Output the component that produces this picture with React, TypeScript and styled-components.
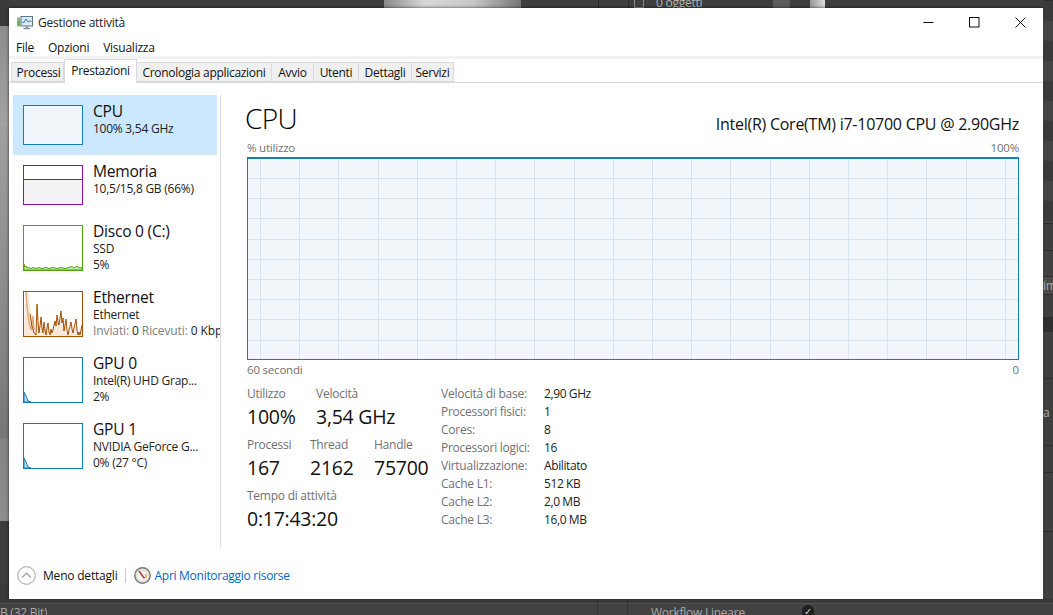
import React from "react";
import styled, { createGlobalStyle } from "styled-components";

const GlobalStyle = createGlobalStyle`
  html, body {
    margin: 0;
    padding: 0;
    height: 615px;
    overflow: hidden;
    background: #3c3c3c;
    font-family: "Open Sans", "Noto Sans", "Liberation Sans", sans-serif;
    font-size: 12px;
    letter-spacing: -0.25px;
  }
`;

const Desktop = styled.div`
  width: 1053px;
  height: 615px;
  display: grid;
  grid-template-columns: 9px 1fr 10px;
  grid-template-rows: 8px 1fr 16px;
  overflow: hidden;
`;

const LeftStrip = styled.div`
  grid-row: 1 / 3;
  display: flex;
  flex-direction: column;
  background: #3a3a3a;
`;

const LeftBand = styled.div<{ $h: number; $bg: string }>`
  height: ${(p) => p.$h}px;
  background: ${(p) => p.$bg};
  flex-shrink: 0;
`;

const TopStrip = styled.div`
  display: flex;
  background: #3e3e3e;
  overflow: hidden;
  color: #b5b5b5;
`;

const TopChunk = styled.div<{ $w: number; $bg?: string; $line?: boolean }>`
  width: ${(p) => p.$w}px;
  height: 8px;
  flex-shrink: 0;
  background: ${(p) => p.$bg || "transparent"};
  border-right: ${(p) => (p.$line ? "1px solid #2b2b2b" : "none")};
  box-sizing: border-box;
`;

const PlusBox = styled.div`
  width: 10px;
  height: 8px;
  margin: 0 12px 0 5px;
  flex-shrink: 0;
  box-sizing: border-box;
  border: 1px solid #8a8a8a;
  border-top: none;
`;

const TopText = styled.div`
  font-size: 12px;
  line-height: 6px;
  height: 8px;
  width: 117px;
  flex-shrink: 0;
  overflow: hidden;
`;

const RightStrip = styled.div`
  grid-row: 1 / 3;
  grid-column: 3;
  display: flex;
  flex-direction: column;
  overflow: hidden;
  color: #a9a9a9;
`;

const RightBand = styled.div<{ $h: number; $bg: string }>`
  height: ${(p) => p.$h}px;
  flex-shrink: 0;
  background: ${(p) => p.$bg};
  border-top: 1px solid #2e2e2e;
  box-sizing: border-box;
  font-size: 12px;
  line-height: ${(p) => p.$h}px;
  white-space: nowrap;
  overflow: hidden;
`;

const BottomStrip = styled.div`
  grid-column: 1 / 4;
  display: flex;
  background: linear-gradient(#3a3a3a 3px, #525252 3px, #525252 4px, #424242 4px);
  border-top: 1px solid #343434;
  box-sizing: border-box;
  overflow: hidden;
  color: #a8a8a8;
  font-size: 12px;
`;

const BottomCell = styled.div<{ $w: number; $line?: boolean }>`
  width: ${(p) => p.$w}px;
  flex-shrink: 0;
  box-sizing: border-box;
  display: flex;
  align-items: flex-end;
  border-right: ${(p) => (p.$line ? "1px solid #333" : "none")};
`;

const BottomText = styled.div`
  height: 9px;
  line-height: 14px;
  white-space: nowrap;
  overflow: hidden;
`;

const BottomCheck = styled.div`
  width: 12px;
  height: 10px;
  border-radius: 6px 6px 0 0;
  background: #1f1f1f;
  color: #cfcfcf;
  font-size: 10px;
  line-height: 12px;
  text-align: center;
  overflow: hidden;
  align-self: flex-end;
`;

const Window = styled.div`
  grid-column: 2;
  display: flex;
  flex-direction: column;
  background: #fff;
  box-shadow: 0 0 3px rgba(0, 0, 0, 0.7);
  color: #000;
  min-height: 0;
`;

const TitleBar = styled.div`
  height: 29px;
  display: flex;
  align-items: center;
  padding-left: 8px;
  flex-shrink: 0;
`;

const TitleText = styled.div`
  margin-left: 5px;
  color: #222;
  flex: 1;
`;

const WinButton = styled.div`
  width: 46px;
  height: 29px;
  display: flex;
  align-items: center;
  justify-content: center;
`;

const MenuBar = styled.div`
  height: 19px;
  box-sizing: border-box;
  display: flex;
  align-items: center;
  padding: 1px 0 0 7px;
  gap: 14px;
  flex-shrink: 0;
`;

const MenuItem = styled.div`
  color: #111;
`;

const TabBar = styled.div`
  height: 27px;
  display: flex;
  align-items: flex-end;
  box-sizing: border-box;
  padding-left: 2px;
  background: linear-gradient(#f2f2f2 0, #f2f2f2 3px, #fff 3px);
  border-bottom: 1px solid #d9d9d9;
  flex-shrink: 0;
`;

const Tab = styled.div<{ $w: number; $active?: boolean }>`
  width: ${(p) => p.$w}px;
  height: ${(p) => (p.$active ? 24 : 20)}px;
  margin-bottom: ${(p) => (p.$active ? -1 : 0)}px;
  box-sizing: border-box;
  display: flex;
  align-items: center;
  justify-content: center;
  background: ${(p) => (p.$active ? "#fff" : "#f0f0f0")};
  border: 1px solid #d9d9d9;
  border-left-width: ${(p) => (p.$active ? 1 : 0)}px;
  border-bottom-width: ${(p) => (p.$active ? 0 : 1)}px;
  padding-bottom: ${(p) => (p.$active ? 2 : 0)}px;
  color: #111;
  letter-spacing: -0.3px;
  &:first-child {
    border-left-width: 1px;
    padding-left: 2px;
  }
`;

const Body = styled.div`
  flex: 1;
  min-height: 0;
  display: flex;
  padding-top: 12px;
`;

const Sidebar = styled.div`
  width: 212px;
  flex-shrink: 0;
  box-sizing: border-box;
  border-right: 1px solid #dcdcdc;
  overflow: hidden;
  padding-left: 4px;
`;

const Item = styled.div<{ $selected?: boolean; $tall?: boolean }>`
  width: 204px;
  height: ${(p) => (p.$tall ? 66 : 60)}px;
  box-sizing: border-box;
  padding: 10px 0 0 10px;
  display: flex;
  gap: 10px;
  background: ${(p) => (p.$selected ? "#cce8ff" : "transparent")};
`;

const Thumb = styled.div<{ $tall?: boolean; $color: string; $bg?: string }>`
  width: 60px;
  height: ${(p) => (p.$tall ? 46 : 40)}px;
  box-sizing: border-box;
  border: 1px solid ${(p) => p.$color};
  background: ${(p) => p.$bg || "#fff"};
  flex-shrink: 0;
  display: flex;
  flex-direction: column;
`;

const MemoryTop = styled.div`
  height: 13px;
  background: #fff;
  border-bottom: 1px solid #8b12ae;
`;

const ThumbSvg = styled.svg`
  display: block;
  width: 58px;
  height: 44px;
`;

const ItemText = styled.div`
  margin-top: -4px;
  white-space: nowrap;
`;

const ItemName = styled.div`
  font-size: 15.6px;
  line-height: 20px;
  color: #111;
`;

const ItemSub = styled.div`
  line-height: 16px;
  color: #222;
`;

const TransferLine = styled(ItemSub)`
  letter-spacing: -0.1px;
`;

const Muted = styled.span`
  color: #808080;
`;

const Panel = styled.div`
  flex: 1;
  min-width: 0;
  padding: 0 24px 0 26px;
  display: flex;
  flex-direction: column;
`;

const Header = styled.div`
  display: flex;
  justify-content: space-between;
  align-items: center;
  height: 46px;
  margin-top: -8px;
  padding-top: 8px;
`;

const BigTitle = styled.div`
  font-size: 28px;
  font-weight: 300;
  letter-spacing: -0.6px;
  margin-left: -2px;
  color: #000;
`;

const CpuName = styled.div`
  font-size: 16px;
  letter-spacing: -0.25px;
  margin-top: 11px;
  color: #111;
`;

const AxisRow = styled.div`
  display: flex;
  justify-content: space-between;
  align-items: center;
  height: 16px;
  margin: -2px 0 2px;
  font-size: 11.5px;
  letter-spacing: -0.2px;
  color: #707070;
`;

const Chart = styled.div`
  height: 203px;
  box-sizing: border-box;
  border: 2px solid #117dbb;
  border-width: 2px 1.5px 1.5px 1.5px;
  background: #f1f6fa;
  flex-shrink: 0;
  overflow: hidden;
`;

const ChartSvg = styled.svg`
  display: block;
  width: 100%;
  height: 100%;
`;

const CaptionRow = styled(AxisRow)`
  margin: 1px 0 0;
`;

const Stats = styled.div`
  display: flex;
  margin-top: 9px;
`;

const StatsLeft = styled.div`
  width: 194px;
  flex-shrink: 0;
`;

const StatRow = styled.div`
  display: flex;
  height: 51px;
`;

const Stat = styled.div<{ $w: number }>`
  width: ${(p) => p.$w}px;
  flex-shrink: 0;
`;

const StatLabel = styled.div`
  line-height: 16px;
  color: #707070;
`;

const StatValue = styled.div`
  font-size: 19.5px;
  line-height: 30px;
  letter-spacing: -0.25px;
  color: #111;
  white-space: nowrap;
`;

const Details = styled.div`
  display: grid;
  grid-template-columns: 103px auto;
  grid-auto-rows: 18px;
  align-items: center;
  justify-content: start;
  margin-top: -2px;
`;

const DetailKey = styled.div`
  color: #707070;
`;

const DetailValue = styled.div`
  color: #222;
  letter-spacing: -0.4px;
`;

const Footer = styled.div`
  height: 44px;
  box-sizing: border-box;
  padding: 0 0 4px 8px;
  flex-shrink: 0;
  display: flex;
  align-items: center;
  margin-top: 8px;
`;

const FooterLabel = styled.div`
  margin-left: 7px;
  color: #111;
  letter-spacing: -0.2px;
`;

const FooterSep = styled.div`
  width: 1px;
  height: 15px;
  background: #c8c8c8;
  margin: 0 8px 0 7px;
`;

const FooterLink = styled.a`
  margin-left: 4px;
  color: #0066cc;
  letter-spacing: -0.28px;
`;

const IconSvg = styled.svg`
  display: block;
  flex-shrink: 0;
`;

const tabs = [
  { label: "Processi", w: 53 },
  { label: "Prestazioni", w: 73, active: true },
  { label: "Cronologia applicazioni", w: 135 },
  { label: "Avvio", w: 42 },
  { label: "Utenti", w: 45 },
  { label: "Dettagli", w: 53 },
  { label: "Servizi", w: 42 },
];

const verticals = Array.from({ length: 20 }, (_, i) => Math.round(12 + i * 39.2));
const horizontals = Array.from({ length: 9 }, (_, i) => Math.round(19 + i * 20.2));

const details = [
  ["Velocità di base:", "2,90 GHz"],
  ["Processori fisici:", "1"],
  ["Cores:", "8"],
  ["Processori logici:", "16"],
  ["Virtualizzazione:", "Abilitato"],
  ["Cache L1:", "512 KB"],
  ["Cache L2:", "2,0 MB"],
  ["Cache L3:", "16,0 MB"],
];

const ethernetArea =
  "1,0 5,0 7,20 10,38 12,43 13,12 15,40 17,26 19,40 20,30 22,42 24,32 26,42 27,38 29,40 31,30 33,24 35,32 37,20 38,30 40,38 42,28 44,43 46,36 48,30 50,40 52,28 54,42 56,42 58,34 58,44 0,44";

const ethernetPale = "2,0 3,14 5,30 7,38 9,24 10,38";

const ethernetLine =
  "6,22 8,34 10,41 12,43 13,12 14,30 15,41 16,34 17,25 18,36 19,41 20,30 21,38 22,43 23,36 24,31 25,40 26,43 27,37 28,41 29,38 30,33 31,29 32,34 33,23 34,30 35,33 36,26 37,19 38,31 39,26 40,39 41,33 42,27 43,38 44,43 45,38 46,34 47,30 48,37 49,41 50,36 51,32 52,27 53,38 54,43 55,40 56,43 57,38 58,33";

const diskPoints =
  "0,44 0,38 1,41 2,40 3,42 5,41.5 7,42.5 9,41.5 12,42.5 15,41.5 18,42.5 22,41.5 25,42.5 29,41.5 33,42.5 37,41.5 41,42.5 45,41.5 48,40.5 50,42 53,40 55,42 58,41.5 58,44";

const GpuSpark = () => (
  <ThumbSvg viewBox="0 0 58 44">
    <polygon points="0,44 0,34 2,38 4,43 7,44" fill="#bcdcee" stroke="#117dbb" strokeWidth="1" />
  </ThumbSvg>
);

const EthernetSpark = () => (
  <ThumbSvg viewBox="0 0 58 44">
    <polygon points={ethernetArea} fill="#f8e9dc" />
    <polyline points={ethernetPale} fill="none" stroke="#e3a877" strokeWidth="1.4" />
    <polyline points={ethernetLine} fill="none" stroke="#a74f01" strokeWidth="1" />
  </ThumbSvg>
);

const AppIcon = () => (
  <IconSvg width="16" height="16" viewBox="0 0 16 16">
    <rect x="0.5" y="3" width="2.5" height="8" fill="#9fb89a" stroke="#6f8f6a" strokeWidth="0.5" />
    <rect x="0.8" y="6" width="1.8" height="4.5" fill="#4fae58" />
    <rect x="4" y="1.5" width="11.5" height="9.5" fill="#dcecf7" stroke="#5f7484" strokeWidth="1" />
    <polyline points="5,7 7,7.5 9,4 11,7 12.5,6 14.5,6.5" fill="none" stroke="#2a7fc4" strokeWidth="1" />
    <rect x="8.5" y="11" width="2.5" height="2" fill="#8a99a5" />
    <rect x="6.5" y="13" width="6.5" height="1.2" fill="#7f8d98" />
  </IconSvg>
);

const MonitorIcon = () => (
  <IconSvg width="17" height="17" viewBox="0 0 17 17">
    <circle cx="8.5" cy="8.5" r="7.7" fill="#efeee9" stroke="#7b7872" strokeWidth="1.4" />
    <circle cx="8.5" cy="8.5" r="5.6" fill="#fbfaf6" stroke="#c8c5bd" strokeWidth="0.7" />
    <line x1="5" y1="4" x2="10.5" y2="11.5" stroke="#c9302a" strokeWidth="1.5" />
    <line x1="12" y1="7" x2="12" y2="11" stroke="#e8862a" strokeWidth="1.2" />
  </IconSvg>
);

const App = () => {
  return (
    <>
      <GlobalStyle />
      <Desktop>
        <LeftStrip>
          <LeftBand $h={26} $bg="#3a3a3a" />
          <LeftBand $h={100} $bg="linear-gradient(#8d8d8d, #a3a3a3)" />
          <LeftBand $h={180} $bg="linear-gradient(#a0a0a0, #8a8a8a)" />
          <LeftBand $h={132} $bg="linear-gradient(#8a8a8a, #777)" />
          <LeftBand $h={83} $bg="linear-gradient(#838383, #8e8e8e)" />
          <LeftBand $h={63} $bg="#3d3d3d" />
        </LeftStrip>

        <TopStrip>
          <TopChunk $w={375} />
          <TopChunk $w={137} $bg="linear-gradient(90deg, #8a8a8a, #d8d8d8 30%, #c8c8c8 65%, #777)" />
          <TopChunk $w={78} $line />
          <TopChunk $w={30} $line />
          <PlusBox />
          <TopText>0 oggetti</TopText>
          <TopChunk $w={17} $bg="#5c5c5c" />
          <TopChunk $w={20} />
          <TopChunk $w={15} $bg="linear-gradient(90deg, #999, #ddd)" />
        </TopStrip>

        <Window>
          <TitleBar>
            <AppIcon />
            <TitleText>Gestione attività</TitleText>
            <WinButton>
              <svg width="11" height="11" viewBox="0 0 11 11">
                <rect x="0.5" y="5" width="10" height="1" fill="#111" />
              </svg>
            </WinButton>
            <WinButton>
              <svg width="11" height="11" viewBox="0 0 11 11">
                <rect x="0.5" y="0.5" width="9.5" height="9.5" fill="none" stroke="#111" strokeWidth="1" />
              </svg>
            </WinButton>
            <WinButton>
              <svg width="11" height="11" viewBox="0 0 11 11">
                <path d="M0.5 0.5 L10.5 10.5 M10.5 0.5 L0.5 10.5" stroke="#111" strokeWidth="1" />
              </svg>
            </WinButton>
          </TitleBar>

          <MenuBar>
            <MenuItem>File</MenuItem>
            <MenuItem>Opzioni</MenuItem>
            <MenuItem>Visualizza</MenuItem>
          </MenuBar>

          <TabBar>
            {tabs.map((t) => (
              <Tab key={t.label} $w={t.w} $active={t.active}>
                {t.label}
              </Tab>
            ))}
          </TabBar>

          <Body>
            <Sidebar>
              <Item $selected>
                <Thumb $color="#117dbb" $bg="#f1f6fa" />
                <ItemText>
                  <ItemName>CPU</ItemName>
                  <ItemSub>100% 3,54 GHz</ItemSub>
                </ItemText>
              </Item>
              <Item>
                <Thumb $color="#8b12ae" $bg="#f4f2f4">
                  <MemoryTop />
                </Thumb>
                <ItemText>
                  <ItemName>Memoria</ItemName>
                  <ItemSub>10,5/15,8 GB (66%)</ItemSub>
                </ItemText>
              </Item>
              <Item $tall>
                <Thumb $tall $color="#4da60c">
                  <ThumbSvg viewBox="0 0 58 44">
                    <polygon points={diskPoints} fill="#cfe8bd" stroke="#4da60c" strokeWidth="1" />
                  </ThumbSvg>
                </Thumb>
                <ItemText>
                  <ItemName>Disco 0 (C:)</ItemName>
                  <ItemSub>SSD</ItemSub>
                  <ItemSub>5%</ItemSub>
                </ItemText>
              </Item>
              <Item $tall>
                <Thumb $tall $color="#a74f01">
                  <EthernetSpark />
                </Thumb>
                <ItemText>
                  <ItemName>Ethernet</ItemName>
                  <ItemSub>Ethernet</ItemSub>
                  <TransferLine>
                    <Muted>Inviati:</Muted> 0 <Muted>Ricevuti:</Muted> 0 Kbps
                  </TransferLine>
                </ItemText>
              </Item>
              <Item $tall>
                <Thumb $tall $color="#117dbb">
                  <GpuSpark />
                </Thumb>
                <ItemText>
                  <ItemName>GPU 0</ItemName>
                  <ItemSub>Intel(R) UHD Grap...</ItemSub>
                  <ItemSub>2%</ItemSub>
                </ItemText>
              </Item>
              <Item $tall>
                <Thumb $tall $color="#117dbb">
                  <GpuSpark />
                </Thumb>
                <ItemText>
                  <ItemName>GPU 1</ItemName>
                  <ItemSub>NVIDIA GeForce G...</ItemSub>
                  <ItemSub>0% (27 °C)</ItemSub>
                </ItemText>
              </Item>
            </Sidebar>

            <Panel>
              <Header>
                <BigTitle>CPU</BigTitle>
                <CpuName>Intel(R) Core(TM) i7-10700 CPU @ 2.90GHz</CpuName>
              </Header>
              <AxisRow>
                <span>% utilizzo</span>
                <span>100%</span>
              </AxisRow>
              <Chart>
                <ChartSvg viewBox="0 0 769 200" preserveAspectRatio="none" shapeRendering="crispEdges">
                  {verticals.map((x) => (
                    <line key={x} x1={x} y1={0} x2={x} y2={200} stroke="#d3e4f0" strokeWidth="1" />
                  ))}
                  {horizontals.map((y) => (
                    <line key={y} x1={0} y1={y} x2={769} y2={y} stroke="#d3e4f0" strokeWidth="1" />
                  ))}
                </ChartSvg>
              </Chart>
              <CaptionRow>
                <span>60 secondi</span>
                <span>0</span>
              </CaptionRow>
              <Stats>
                <StatsLeft>
                  <StatRow>
                    <Stat $w={69}>
                      <StatLabel>Utilizzo</StatLabel>
                      <StatValue>100%</StatValue>
                    </Stat>
                    <Stat $w={100}>
                      <StatLabel>Velocità</StatLabel>
                      <StatValue>3,54 GHz</StatValue>
                    </Stat>
                  </StatRow>
                  <StatRow>
                    <Stat $w={63}>
                      <StatLabel>Processi</StatLabel>
                      <StatValue>167</StatValue>
                    </Stat>
                    <Stat $w={64}>
                      <StatLabel>Thread</StatLabel>
                      <StatValue>2162</StatValue>
                    </Stat>
                    <Stat $w={60}>
                      <StatLabel>Handle</StatLabel>
                      <StatValue>75700</StatValue>
                    </Stat>
                  </StatRow>
                  <StatRow>
                    <Stat $w={120}>
                      <StatLabel>Tempo di attività</StatLabel>
                      <StatValue>0:17:43:20</StatValue>
                    </Stat>
                  </StatRow>
                </StatsLeft>
                <Details>
                  {details.map(([k, v]) => (
                    <React.Fragment key={k}>
                      <DetailKey>{k}</DetailKey>
                      <DetailValue>{v}</DetailValue>
                    </React.Fragment>
                  ))}
                </Details>
              </Stats>
            </Panel>
          </Body>

          <Footer>
            <IconSvg width="19" height="19" viewBox="0 0 19 19">
              <circle cx="9.5" cy="9.5" r="8.8" fill="none" stroke="#a0a0a0" strokeWidth="1" />
              <path d="M5 11.5 L9.5 7 L14 11.5" fill="none" stroke="#a0a0a0" strokeWidth="1.2" />
            </IconSvg>
            <FooterLabel>Meno dettagli</FooterLabel>
            <FooterSep />
            <MonitorIcon />
            <FooterLink>Apri Monitoraggio risorse</FooterLink>
          </Footer>
        </Window>

        <RightStrip>
          <RightBand $h={223} $bg="repeating-linear-gradient(#3a3a3a 0, #3a3a3a 20px, #444 20px, #444 40px)" />
          <RightBand $h={27} $bg="#3f3f3f" />
          <RightBand $h={26} $bg="#404040" />
          <RightBand $h={18} $bg="#4a4a4a">im</RightBand>
          <RightBand $h={23} $bg="#3f3f3f" />
          <RightBand $h={14} $bg="#2f2f2f" />
          <RightBand $h={47} $bg="#3f3f3f" />
          <RightBand $h={67} $bg="#3f3f3f">a</RightBand>
          <RightBand $h={27} $bg="#3f3f3f" />
          <RightBand $h={59} $bg="#3f3f3f" />
          <RightBand $h={68} $bg="#3f3f3f" />
        </RightStrip>

        <BottomStrip>
          <BottomCell $w={598} $line>
            <BottomText>B (32 Bit)</BottomText>
          </BottomCell>
          <BottomCell $w={30} $line />
          <BottomCell $w={23} />
          <BottomCell $w={151}>
            <BottomText>Workflow Lineare</BottomText>
          </BottomCell>
          <BottomCheck>✓</BottomCheck>
        </BottomStrip>
      </Desktop>
    </>
  );
};

export default App;
